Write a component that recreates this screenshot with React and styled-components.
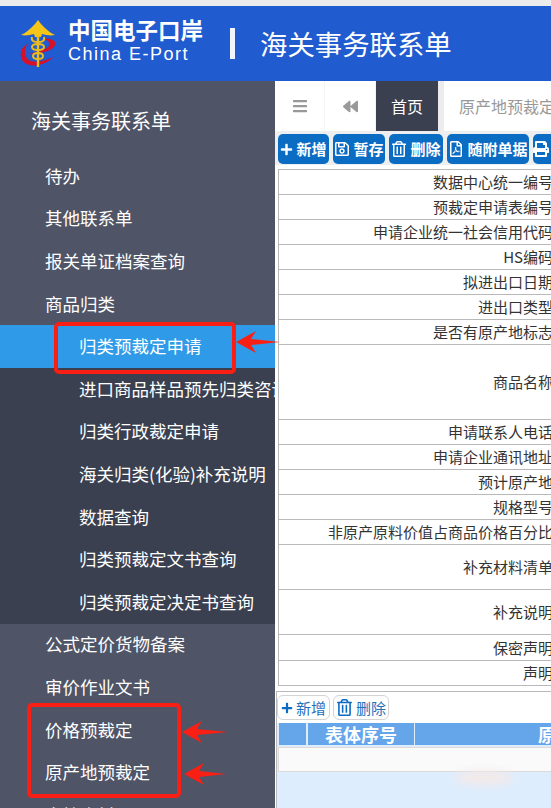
import React from 'react';
import styled, { createGlobalStyle } from 'styled-components';
import { FaPlus, FaRegSave, FaRegTrashAlt, FaRegFilePdf, FaPrint, FaBars, FaBackward } from 'react-icons/fa';

const Global = createGlobalStyle`
  html, body { margin: 0; padding: 0; background: #fff; }
  body { font-family: "Liberation Sans", "Noto Sans CJK SC", sans-serif; }
  * { box-sizing: border-box; }
`;

const Page = styled.div`
  position: relative;
  width: 551px;
  height: 808px;
  overflow: hidden;
  padding-top: 6px;
  background: #ececec;
  display: flex;
  flex-direction: column;
`;

const Header = styled.header`
  height: 75px;
  flex: none;
  background: #205bcf;
  color: #fff;
  display: flex;
  align-items: center;
  padding-left: 20px;
`;

const Brand = styled.div`
  margin-left: 11px;
  padding-bottom: 6px;
  width: 153px;
  display: flex;
  flex-direction: column;
  gap: 2px;
`;

const BrandCn = styled.div`
  font: 700 22.5px/24px "Noto Sans CJK SC", sans-serif;
  white-space: nowrap;
`;

const BrandEn = styled.div`
  font: 400 18px/22px "Liberation Sans", sans-serif;
  letter-spacing: 1.5px;
  white-space: nowrap;
`;

const Bar = styled.div`
  width: 5px;
  height: 31px;
  margin: 0 25px 0 9px;
  background: #f2f5fc;
`;

const HeaderTitle = styled.div`
  padding-bottom: 2px;
  font: 400 27.4px/36px "Noto Sans CJK SC", sans-serif;
  white-space: nowrap;
`;

const Body = styled.div`
  flex: 1;
  display: flex;
  min-height: 0;
`;

const Sidebar = styled.nav`
  width: 275px;
  flex: none;
  background: #4f5467;
  color: #fff;
  overflow: hidden;
  font-family: "Noto Sans CJK SC", sans-serif;
`;

const SideTitle = styled.div`
  height: 74px;
  padding: 4px 0 0 31px;
  font-size: 20px;
  display: flex;
  align-items: center;
`;

const SideItem = styled.div`
  height: 42.6px;
  padding: 0 0 2px ${p => (p.$sub ? 79 : 45)}px;
  display: flex;
  align-items: center;
  font-size: 17.5px;
  white-space: nowrap;
  background: ${p => (p.$active ? '#2f9be8' : 'transparent')};
`;

const SubMenu = styled.div`
  background: #3a4050;
`;

const Main = styled.main`
  flex: 1;
  min-width: 0;
  background: #fff;
  display: flex;
  flex-direction: column;
`;

const Tabs = styled.div`
  height: 50px;
  flex: none;
  display: flex;
  background: #fff;
  font-family: "Noto Sans CJK SC", sans-serif;
`;

const TabIcon = styled.div`
  width: ${p => p.$w}px;
  flex: none;
  display: flex;
  align-items: center;
  justify-content: center;
  color: #999;
  font-size: ${p => p.$size}px;
  border-right: 1px solid #f4f4f4;
`;

const HomeTab = styled.div`
  width: 62px;
  flex: none;
  background: #3a4050;
  color: #fff;
  font-size: 16px;
  display: flex;
  align-items: center;
  justify-content: center;
`;

const TabGap = styled.div`
  width: 6px;
  flex: none;
  background: #ececec;
`;

const Tab = styled.div`
  flex: none;
  padding-left: 15px;
  color: #999;
  font-size: 16px;
  white-space: nowrap;
  display: flex;
  align-items: center;
`;

const Toolbar = styled.div`
  height: 34px;
  flex: none;
  background: #eceef0;
  padding: 3px 0 0 3px;
  display: flex;
  gap: 4px;
  overflow: hidden;
`;

const ToolButton = styled.div`
  width: ${p => p.$w}px;
  height: 30px;
  flex: none;
  border-radius: 5px;
  background: #0b6cc4;
  color: #fff;
  font: 700 15px/30px "Noto Sans CJK SC", sans-serif;
  display: flex;
  align-items: center;
  justify-content: center;
  gap: 3px;
  white-space: nowrap;
  overflow: hidden;
  svg { flex: none; }
`;

const Form = styled.div`
  margin: 4px 0 0 3px;
  width: 290px;
  flex: none;
  border-top: 1px solid #b9b9b9;
`;

const FormRow = styled.div`
  height: ${p => p.$h}px;
  border-left: 1px solid #b9b9b9;
  border-bottom: 1px solid #b9b9b9;
  display: flex;
  align-items: center;
  justify-content: flex-end;
  padding-right: 15px;
  color: #333;
  font: 400 15px/20px "Noto Sans CJK SC", sans-serif;
  white-space: nowrap;
`;

const Detail = styled.section`
  margin: 5px 0 0 1px;
  flex: 1;
  min-height: 0;
  border-top: 1px solid #b9b9b9;
  border-left: 1px solid #b9b9b9;
  display: flex;
  flex-direction: column;
  background: #deedfd;
  position: relative;
  overflow: hidden;
`;

const DetailBar = styled.div`
  height: 31px;
  flex: none;
  background: #fff;
  padding-top: 3px;
  display: flex;
  gap: 3px;
`;

const GhostButton = styled.div`
  width: ${p => p.$w}px;
  height: 25px;
  border: 1px solid #d4d4d4;
  border-radius: 6px;
  background: #fff;
  color: #1f70bd;
  font: 400 15px/23px "Noto Sans CJK SC", sans-serif;
  display: flex;
  align-items: center;
  justify-content: center;
  gap: 3px;
  white-space: nowrap;
  svg { flex: none; color: #0b6cc4; }
`;

const DetailHead = styled.div`
  height: 22px;
  flex: none;
  margin-left: 2px;
  display: flex;
  gap: 2px;
`;

const HeadCell = styled.div`
  width: ${p => p.$w}px;
  flex: none;
  background: #65a5ea;
  color: #fff;
  font: 700 18px/22px "Noto Sans CJK SC", sans-serif;
  text-align: center;
  white-space: nowrap;
  & + & + & { margin-left: -1px; }
`;

const DetailEmpty = styled.div`
  height: 25px;
  flex: none;
  margin: 2px 0 0 1px;
  background: #fafafa;
  border: 1px solid #ded9d9;
  border-right: 0;
`;

const Blob = styled.div`
  position: absolute;
  left: 178px;
  top: 79px;
  width: 58px;
  height: 14px;
  border-radius: 50%;
  background: #f3e9e8;
  filter: blur(4px);
`;

const Mark = styled.div`
  position: absolute;
  left: ${p => p.$x}px;
  top: ${p => p.$y}px;
  width: ${p => p.$w}px;
  height: ${p => p.$h}px;
  border: 4px solid #fa1f14;
  border-radius: 5px;
`;

const Arrow = styled.svg`
  position: absolute;
  left: ${p => p.$x}px;
  top: ${p => p.$y}px;
`;

function Logo() {
  return (
    <svg width="37" height="50" viewBox="0 0 37 50" style={{ flex: 'none' }}>
      <path d="M23 20 C30 19 37 21 35 26 C33 32 20 35 8 35 C16 33 26 31 29 27 C31 24 28 21 23 20Z" fill="#d8102a" />
      <path d="M8 25 C2 27 0 33 1 38 C2 45 12 48 18 46 C24 45 30 42 33 38 C27 41 18 44 11 42 C4 40 3 30 8 25Z" fill="#d8102a" />
      <path d="M1 16 C6 14 11 9 15 5 L18 1 L21 5 C25 9 30 14 35 16 C30 17 26 16 22 15 L21 18 L15 18 L14 15 C10 16 6 17 1 16Z" fill="#f5c518" />
      <path d="M18 16 V48" stroke="#ecbc1c" strokeWidth="2.4" />
      <path d="M12 18 C11 22 14 23 18 23 C22 23 25 22 24 18 M12 28 C12 24 24 24 24 28 C24 32 12 32 12 28Z M13 37 C13 33 23 33 23 37 C23 41 13 41 13 37Z" fill="none" stroke="#ecbc1c" strokeWidth="2" />
    </svg>
  );
}

function RedArrow({ x, y, w }) {
  return (
    <Arrow $x={x} $y={y} width={w} height="22" viewBox={`0 0 ${w} 22`}>
      <path d={`M0 11 L20 0 L15 8 L${w} 11 L15 14 L20 22 Z`} fill="#fa1f14" />
    </Arrow>
  );
}

const subItems = ['归类预裁定申请', '进口商品样品预先归类咨询', '归类行政裁定申请', '海关归类(化验)补充说明', '数据查询', '归类预裁定文书查询', '归类预裁定决定书查询'];

const formRows = [
  ['数据中心统一编号', 25], ['预裁定申请表编号', 25], ['申请企业统一社会信用代码', 25], ['HS编码', 25],
  ['拟进出口日期', 25], ['进出口类型', 25], ['是否有原产地标志', 25], ['商品名称', 75],
  ['申请联系人电话', 25], ['申请企业通讯地址', 25], ['预计原产地', 25], ['规格型号', 25],
  ['非原产原料价值占商品价格百分比', 25], ['补充材料清单', 45], ['补充说明', 45], ['保密声明', 26], ['声明', 25],
];

export default function App() {
  return (
    <Page>
      <Global />
      <Header>
        <Logo />
        <Brand>
          <BrandCn>中国电子口岸</BrandCn>
          <BrandEn>China E-Port</BrandEn>
        </Brand>
        <Bar />
        <HeaderTitle>海关事务联系单</HeaderTitle>
      </Header>
      <Body>
        <Sidebar>
          <SideTitle>海关事务联系单</SideTitle>
          {['待办', '其他联系单', '报关单证档案查询', '商品归类'].map(t => <SideItem key={t}>{t}</SideItem>)}
          <SubMenu>
            {subItems.map((t, i) => <SideItem key={t} $sub $active={i === 0}>{t}</SideItem>)}
          </SubMenu>
          {['公式定价货物备案', '审价作业文书', '价格预裁定', '原产地预裁定', '商检资料'].map(t => <SideItem key={t}>{t}</SideItem>)}
        </Sidebar>
        <Main>
          <Tabs>
            <TabIcon $w={50} $size={16}><FaBars /></TabIcon>
            <TabIcon $w={51} $size={15}><FaBackward /></TabIcon>
            <HomeTab>首页</HomeTab>
            <TabGap />
            <Tab>原产地预裁定</Tab>
          </Tabs>
          <Toolbar>
            <ToolButton $w={51}><FaPlus size={13} />新增</ToolButton>
            <ToolButton $w={52}><FaRegSave size={16} />暂存</ToolButton>
            <ToolButton $w={54}><FaRegTrashAlt size={16} />删除</ToolButton>
            <ToolButton $w={82}><FaRegFilePdf size={16} />随附单据</ToolButton>
            <ToolButton $w={50}><FaPrint size={16} />打印</ToolButton>
          </Toolbar>
          <Form>
            {formRows.map(([label, h]) => <FormRow key={label} $h={h}>{label}</FormRow>)}
          </Form>
          <Detail>
            <DetailBar>
              <GhostButton $w={53}><FaPlus size={12} />新增</GhostButton>
              <GhostButton $w={56}><FaRegTrashAlt size={17} />删除</GhostButton>
            </DetailBar>
            <DetailHead>
              <HeadCell $w={27} />
              <HeadCell $w={106}>表体序号</HeadCell>
              <HeadCell $w={300}>原产地</HeadCell>
            </DetailHead>
            <DetailEmpty />
            <Blob />
          </Detail>
        </Main>
      </Body>
      <Mark $x={54} $y={322} $w={182} $h={52} />
      <RedArrow x={236} y={331} w={44} />
      <Mark $x={27} $y={703} $w={154} $h={95} />
      <RedArrow x={182} y={721} w={46} />
      <RedArrow x={184} y={763} w={42} />
    </Page>
  );
}
